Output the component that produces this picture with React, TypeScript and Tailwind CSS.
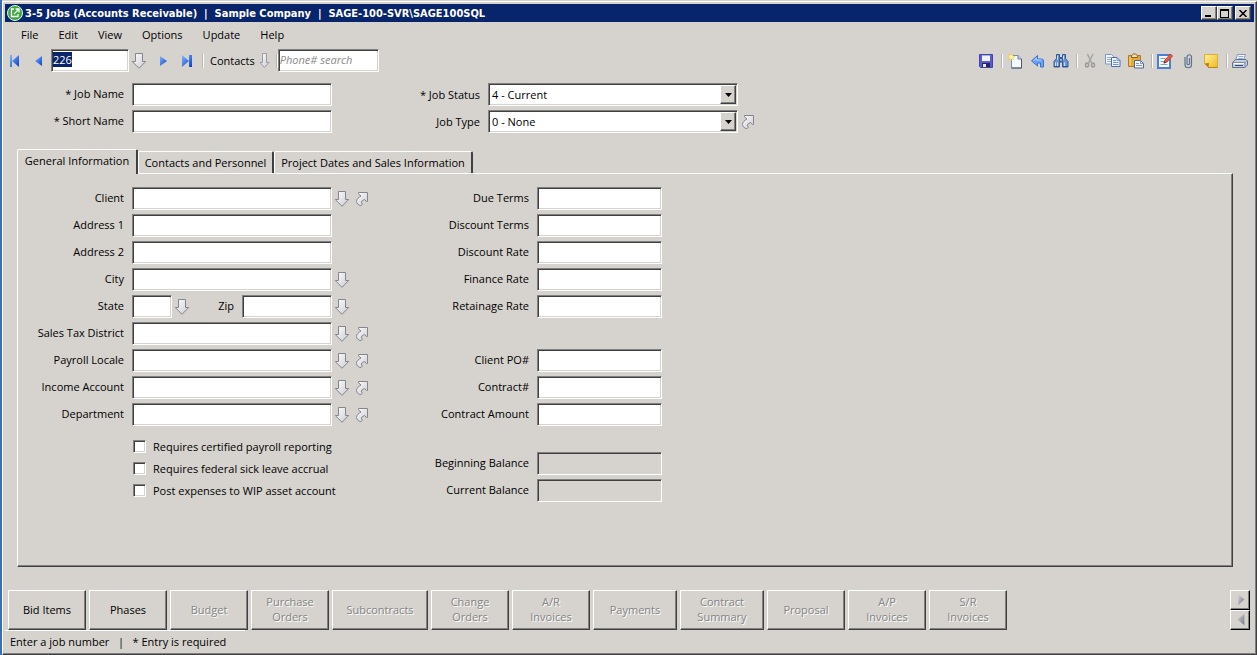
import { useEffect, useRef, useState, type ReactNode } from "react";

// Classic Windows bevels, shared by every field and button on the form.
const SUNKEN =
  "border border-t-[#808080] border-l-[#808080] border-r-white border-b-white shadow-[inset_1px_1px_0_#404040,inset_-1px_-1px_0_#d6d3ce]";
const RAISED =
  "border border-t-white border-l-white border-r-[#404040] border-b-[#404040] shadow-[inset_-1px_-1px_0_#808080]";
const SCROLL =
  "flex h-5 w-5 items-center justify-center border border-t-white border-l-white border-r-black border-b-black shadow-[inset_-1px_-1px_0_#808080]";

const MENUS = ["File", "Edit", "View", "Options", "Update", "Help"];
const TABS = [
  { label: "General Information", width: "w-[121px]" },
  { label: "Contacts and Personnel", width: "w-[136px]" },
  { label: "Project Dates and Sales Information", width: "w-[199px]" },
];

interface Field {
  id: string;
  label: string;
  pick?: boolean;
  jump?: boolean;
}

const ADDRESS_FIELDS: Field[] = [
  { id: "client", label: "Client", pick: true, jump: true },
  { id: "address1", label: "Address 1" },
  { id: "address2", label: "Address 2" },
  { id: "city", label: "City", pick: true },
];

const ACCOUNT_FIELDS: Field[] = [
  { id: "taxDistrict", label: "Sales Tax District", pick: true, jump: true },
  { id: "payrollLocale", label: "Payroll Locale", pick: true, jump: true },
  { id: "incomeAccount", label: "Income Account", pick: true, jump: true },
  { id: "department", label: "Department", pick: true, jump: true },
];

const CHECKS = [
  { id: "certified", label: "Requires certified payroll reporting" },
  { id: "sickLeave", label: "Requires federal sick leave accrual" },
  { id: "wip", label: "Post expenses to WIP asset account" },
];

const TERMS: Field[] = [
  { id: "dueTerms", label: "Due Terms" },
  { id: "discountTerms", label: "Discount Terms" },
  { id: "discountRate", label: "Discount Rate" },
  { id: "financeRate", label: "Finance Rate" },
  { id: "retainageRate", label: "Retainage Rate" },
];

const CONTRACT: Field[] = [
  { id: "clientPo", label: "Client PO#" },
  { id: "contractNo", label: "Contract#" },
  { id: "contractAmount", label: "Contract Amount" },
];

const BALANCES: Field[] = [
  { id: "beginningBalance", label: "Beginning Balance" },
  { id: "currentBalance", label: "Current Balance" },
];

const ACTIONS = [
  { label: "Bid Items", width: "w-[78px]", enabled: true },
  { label: "Phases", width: "w-[78px]", enabled: true },
  { label: "Budget", width: "w-[78px]" },
  { label: "Purchase Orders", width: "w-[78px]" },
  { label: "Subcontracts", width: "w-[96px]" },
  { label: "Change Orders", width: "w-[78px]" },
  { label: "A/R Invoices", width: "w-[78px]" },
  { label: "Payments", width: "w-[84px]" },
  { label: "Contract Summary", width: "w-[84px]" },
  { label: "Proposal", width: "w-[78px]" },
  { label: "A/P Invoices", width: "w-[78px]" },
  { label: "S/R Invoices", width: "w-[78px]" },
];

function Svg({ children, className = "size-4" }: { children: ReactNode; className?: string }) {
  return (
    <svg viewBox="0 0 16 16" fill="none" className={`shrink-0 ${className}`} aria-hidden="true">
      {children}
    </svg>
  );
}

function Gradients() {
  return (
    <svg className="absolute size-0" aria-hidden="true">
      <defs>
        <linearGradient id="silver" x1="0" y1="0" x2="1" y2="1">
          <stop offset="0" stopColor="#ffffff" />
          <stop offset="1" stopColor="#c9c9d2" />
        </linearGradient>
        <linearGradient id="blue" x1="0" y1="0" x2="1" y2="1">
          <stop offset="0" stopColor="#7fb6ff" />
          <stop offset="1" stopColor="#0a3fc8" />
        </linearGradient>
        <linearGradient id="note" x1="0" y1="0" x2="1" y2="1">
          <stop offset="0" stopColor="#fff3a0" />
          <stop offset="1" stopColor="#f0b81c" />
        </linearGradient>
        <linearGradient id="grey" x1="0" y1="0" x2="1" y2="1">
          <stop offset="0" stopColor="#d4d4dc" />
          <stop offset="1" stopColor="#77777f" />
        </linearGradient>
      </defs>
    </svg>
  );
}

function DownArrow() {
  return (
    <Svg>
      <path d="M4.500.500h7v8h3.200L8 15.300 1.300 8.500h3.200z" fill="url(#silver)" stroke="#85858c" />
    </Svg>
  );
}

function SmallDownArrow() {
  return (
    <svg viewBox="0 0 11 16" fill="none" className="h-4 w-[11px] shrink-0" aria-hidden="true">
      <path d="M3.500.500h4v9h2.500L5.500 14.500 1 9.500h2.500z" fill="url(#silver)" stroke="#9a9aa0" />
    </svg>
  );
}

function JumpArrow() {
  return (
    <Svg>
      <path
        d="M4.500 1.500h9v9h-1L10.500 8.500C8 9.500 7 10.500 7.500 12l1 1-1.500 1.700C4.500 14.500 2.500 12.500 2.500 10.500 2.500 8 4.500 6.500 7 5L4.500 2.800z"
        fill="url(#silver)"
        stroke="#85858c"
      />
    </Svg>
  );
}

function SaveIcon() {
  return (
    <Svg>
      <path d="M1.500 1.500h13v13h-12l-1-1z" fill="#5b5bd0" stroke="#4444a4" />
      <path d="M4 2h8v6H4z" fill="#eef3ff" />
      <path d="M4 2h8v1H4z" fill="#9db4ee" />
      <path d="M4 10h8v4H4z" fill="#26265e" />
      <path d="M5 11h3v3H5z" fill="#e8e8f4" />
    </Svg>
  );
}

function NewIcon() {
  return (
    <Svg>
      <path d="M4.500 2.500h6.500l3.500 3.500v9h-10z" fill="#f4f8ff" stroke="#7d8aa8" />
      <path d="M14.500 6v9h-10" stroke="#4b5468" />
      <path d="M11 2.500v3.500h3.500" fill="#c7d6f2" stroke="#6a7796" />
      <path d="M4 0v8M0 4h8M1 1l6 6M7 1L1 7" stroke="#efc94c" />
      <circle cx="4" cy="4" r="2" fill="#fff3a0" />
    </Svg>
  );
}

function UndoIcon() {
  return (
    <Svg>
      <path d="M7.500 2.500v3.500h4q2 0 2 2v6h-3V10h-3v3L1.500 7.800z" fill="#6aa5f7" stroke="#3a6fd0" />
      <path d="M3.500 7.500L6.500 5v2h5" stroke="#b4d6ff" />
    </Svg>
  );
}

function FindIcon() {
  return (
    <Svg>
      <path d="M3.500 1.500h3v3h3v-3h3v4l2.500 3v5.500h-5.500V9h-3v5H1V8.500l2.500-3z" fill="#6c94cf" stroke="#31569a" />
      <path d="M2.500 9.500v4M4.500 9.500v4M11.500 9.500v4M4.500 2.500v4M10.500 2.500v4" stroke="#cfe1f8" />
      <path d="M1 13.500h5.500M9.500 13.500H15" stroke="#31569a" />
      <path d="M6.500 5.500h3v3h-3z" fill="#8fb3e4" stroke="#31569a" />
    </Svg>
  );
}

function CutIcon() {
  return (
    <Svg>
      <path d="M5.500 1l4 9M11 1L6.500 10" stroke="#a5a5a5" strokeWidth="1.500" />
      <ellipse cx="5" cy="12" rx="1.500" ry="2" stroke="#9a9a9a" strokeWidth="1.500" />
      <ellipse cx="11" cy="12" rx="1.500" ry="2" stroke="#9a9a9a" strokeWidth="1.500" />
    </Svg>
  );
}

function CopyIcon() {
  return (
    <Svg>
      <path d="M.500 1.500h6l2.500 2.500v7H.500z" fill="#f2f7ff" stroke="#7c98cc" />
      <path d="M2 4.500h4M2 6.500h4M2 8.500h4" stroke="#8faede" />
      <path d="M6.500 4.500h5.500l3 3v6H6.500z" fill="#f2f7ff" stroke="#4a6db3" />
      <path d="M12 4.500v3h3M8 7.500h3M8 9.500h5.500M8 11.500h5.500" stroke="#6e93d4" />
    </Svg>
  );
}

function PasteIcon() {
  return (
    <Svg>
      <path d="M.500 2.500h12v11H.500z" fill="#e5a93b" stroke="#b07a24" />
      <path d="M3.500 4.500v-2l2-1.500h2l2 1.500v2z" fill="#f5dfa0" stroke="#78613a" />
      <path d="M2 4v8.500" stroke="#ffd987" />
      <path d="M6.500 7.500h6l3 3v4.500h-9z" fill="#f2f7ff" stroke="#4b659a" />
      <path d="M12.500 7.500v3h3M8 10.500h3M8 12.500h6" stroke="#7b98cc" />
    </Svg>
  );
}

function EditIcon() {
  return (
    <Svg>
      <path d="M1 2h12v13H1z" fill="#f5f9ff" stroke="#4a80d4" strokeWidth="2" />
      <path d="M3.500 5.500h5M3.500 8.500h4M3.500 11.500h7" stroke="#7ba2dd" />
      <path d="M7 10l1-3L13.500 1l2 2L10 9z" fill="#ee5a40" stroke="#c9402a" />
      <path d="M6.500 10.500l1-2.500 1.500 1.500z" fill="#3a3a3a" />
    </Svg>
  );
}

function ClipIcon() {
  return (
    <Svg>
      <path
        d="M5 4v7.500a3 3 0 0 0 6.500 0V4a2.200 2.200 0 0 0-4.500 0v6.500a1.200 1.200 0 0 0 2.500 0V5"
        stroke="#5d7291"
        strokeWidth="1.200"
      />
    </Svg>
  );
}

function NoteIcon() {
  return (
    <Svg>
      <path d="M1.500 1.500h13v13h-9l-4-4z" fill="url(#note)" stroke="#dcae30" />
      <path d="M1.500 10.500l4.500-.500-.500 4.500z" fill="#b47c0c" />
      <path d="M5 14.500h9.500" stroke="#b98715" />
    </Svg>
  );
}

function PrintIcon() {
  return (
    <Svg>
      <path d="M5.500 1.500h8l-2 6h-8z" fill="#f4f8ff" stroke="#8499bd" />
      <path d="M6.500 3.500h5M6 5.500h5" stroke="#8daad8" />
      <path d="M.500 9.500l3-3h10.500l1.500 1.500v4l-2.500 2.500H.500z" fill="#c5cede" stroke="#63738f" />
      <path d="M1 9.500h12l2-2M13 9.500v5" stroke="#7d8ca8" />
      <path d="M2 10.500h10" stroke="#ffffff" />
      <path d="M3 12.500h8" stroke="#3c4b6b" />
    </Svg>
  );
}

function Separator({ className = "" }: { className?: string }) {
  return <span className={`h-3.5 w-0.5 shrink-0 border-l border-[#b9b6b1] bg-white ${className}`} />;
}

function IconButton({
  name,
  children,
  disabled,
}: {
  name: string;
  children: ReactNode;
  disabled?: boolean;
}) {
  return (
    <button type="button" aria-label={name} title={name} disabled={disabled} className="flex shrink-0 items-center">
      {children}
    </button>
  );
}

function TextField({ id, className, readOnly }: { id: string; className: string; readOnly?: boolean }) {
  return (
    <input
      id={id}
      type="text"
      readOnly={readOnly}
      className={`h-[23px] shrink-0 px-1 outline-none ${SUNKEN} ${readOnly ? "bg-[#d6d3ce]" : "bg-white"} ${className}`}
    />
  );
}

function LabelledRow({
  field,
  labelWidth,
  inputWidth,
  readOnly,
}: {
  field: Field;
  labelWidth: string;
  inputWidth: string;
  readOnly?: boolean;
}) {
  return (
    <div className="flex items-center">
      <label htmlFor={field.id} className={`shrink-0 pr-2 pb-0.5 text-right ${labelWidth}`}>
        {field.label}
      </label>
      <TextField id={field.id} className={inputWidth} readOnly={readOnly} />
      <div className="flex gap-1 pl-0.5">
        {field.pick && (
          <IconButton name={`Look up ${field.label}`}>
            <DownArrow />
          </IconButton>
        )}
        {field.jump && (
          <IconButton name={`Open ${field.label}`}>
            <JumpArrow />
          </IconButton>
        )}
      </div>
    </div>
  );
}

function SelectRow({
  id,
  label,
  options,
  jump,
}: {
  id: string;
  label: string;
  options: string[];
  jump?: boolean;
}) {
  return (
    <div className="flex items-center">
      <label htmlFor={id} className="w-[93px] shrink-0 pr-2 text-right">
        {label}
      </label>
      <div className="relative w-[250px] shrink-0">
        <select id={id} className={`h-[23px] w-full appearance-none bg-white pl-[3px] outline-none ${SUNKEN}`}>
          {options.map((o) => (
            <option key={o}>{o}</option>
          ))}
        </select>
        <span
          className={`pointer-events-none absolute top-0.5 right-0.5 flex h-[19px] w-4 items-center justify-center bg-[#d6d3ce] ${RAISED}`}
        >
          <svg viewBox="0 0 7 4" className="h-1 w-[7px]" aria-hidden="true">
            <path d="M0 0h7L3.500 4z" fill="#000" />
          </svg>
        </span>
      </div>
      {jump && (
        <div className="flex pl-0.5">
          <IconButton name={`Open ${label}`}>
            <JumpArrow />
          </IconButton>
        </div>
      )}
    </div>
  );
}

function TitleBar() {
  const caption = `flex h-3.5 w-4 items-center justify-center bg-[#d6d3ce] ${RAISED}`;
  return (
    <header className="flex h-[18px] items-center bg-[#08246b] pr-[3px] text-white">
      <svg viewBox="0 0 18 18" className="ml-px size-[18px] shrink-0" aria-hidden="true">
        <circle cx="9" cy="9" r="7.500" fill="#3aa83f" stroke="#e8f5e4" strokeWidth="1" />
        <path d="M8 5H5.500v7.500H12V10" fill="none" stroke="#fff" strokeWidth="1.300" />
        <path d="M8 10l4-4M9.500 5h3.500v3.500" fill="none" stroke="#fff" strokeWidth="1.300" />
      </svg>
      <h1 className="flex-1 truncate pl-px font-['DejaVu_Sans_Condensed','DejaVu_Sans',sans-serif] text-[11px] font-bold whitespace-pre">
        {"3-5 Jobs (Accounts Receivable)  |  Sample Company  |  SAGE-100-SVR\\SAGE100SQL"}
      </h1>
      <button type="button" aria-label="Minimize" className={caption}>
        <svg viewBox="0 0 10 8" className="h-2 w-2.5">
          <path d="M1 6h6v2H1z" fill="#000" />
        </svg>
      </button>
      <button type="button" aria-label="Maximize" className={caption}>
        <svg viewBox="0 0 10 9" className="h-[9px] w-2.5">
          <path d="M0 0h9v9H0zM1 2v6h7V2z" fill="#000" fillRule="evenodd" />
        </svg>
      </button>
      <button type="button" aria-label="Close" className={`ml-0.5 ${caption}`}>
        <svg viewBox="0 0 8 7" className="h-[7px] w-2">
          <path d="M.5 0l7 7M7.500 0l-7 7" stroke="#000" strokeWidth="1.500" />
        </svg>
      </button>
    </header>
  );
}

function Toolbar() {
  const record = useRef<HTMLInputElement>(null);

  useEffect(() => {
    record.current?.focus();
    record.current?.select();
  }, []);

  return (
    <div className="flex h-[25px] items-center justify-between pr-1.5 pl-0.5">
      <div className="flex items-center">
        <IconButton name="First record">
          <Svg>
            <path d="M3 2h2v12H3zM12 2v12L5 8z" fill="url(#blue)" />
          </Svg>
        </IconButton>
        <span className="w-2" />
        <IconButton name="Previous record">
          <Svg>
            <path d="M11 3v10L4 8z" fill="url(#blue)" />
          </Svg>
        </IconButton>
        <input
          ref={record}
          aria-label="Job number"
          defaultValue="226"
          className={`ml-1 h-[23px] w-[78px] bg-white px-px pb-0.5 outline-none selection:bg-[#08246b] selection:text-white ${SUNKEN}`}
        />
        <span className="w-0.5" />
        <IconButton name="Look up job">
          <DownArrow />
        </IconButton>
        <span className="w-2" />
        <IconButton name="Next record">
          <Svg>
            <path d="M5 3v10l7-5z" fill="url(#blue)" />
          </Svg>
        </IconButton>
        <span className="w-2" />
        <IconButton name="Last record">
          <Svg>
            <path d="M3 2v12l7-6zM10 2h3v12h-3z" fill="url(#blue)" />
          </Svg>
        </IconButton>
        <span className="w-[7px]" />
        <Separator />
        <button type="button" className="flex items-center gap-1 px-1.5">
          Contacts
          <SmallDownArrow />
        </button>
        <Separator />
        <input
          aria-label="Phone# search"
          placeholder="Phone# search"
          className={`h-[23px] w-[101px] bg-white px-px pb-0.5 italic outline-none placeholder:text-[#8a8a8a] ${SUNKEN}`}
        />
      </div>
      <div className="flex items-center">
        <IconButton name="Save">
          <SaveIcon />
        </IconButton>
        <Separator className="mr-1 ml-[7px]" />
        <div className="flex gap-[7px]">
          <IconButton name="New">
            <NewIcon />
          </IconButton>
          <IconButton name="Undo">
            <UndoIcon />
          </IconButton>
          <IconButton name="Find">
            <FindIcon />
          </IconButton>
        </div>
        <Separator className="mr-1 ml-[7px]" />
        <div className="flex gap-[7px]">
          <IconButton name="Cut" disabled>
            <CutIcon />
          </IconButton>
          <IconButton name="Copy">
            <CopyIcon />
          </IconButton>
          <IconButton name="Paste">
            <PasteIcon />
          </IconButton>
        </div>
        <Separator className="mr-1 ml-[7px]" />
        <div className="flex gap-[7px]">
          <IconButton name="Edit notes">
            <EditIcon />
          </IconButton>
          <IconButton name="Attachments">
            <ClipIcon />
          </IconButton>
          <IconButton name="Note">
            <NoteIcon />
          </IconButton>
        </div>
        <Separator className="mr-1 ml-[7px]" />
        <IconButton name="Print">
          <PrintIcon />
        </IconButton>
      </div>
    </div>
  );
}

function GeneralInformation() {
  return (
    <div className="flex">
      <div className="flex w-[390px] shrink-0 flex-col gap-1">
        {ADDRESS_FIELDS.map((f) => (
          <LabelledRow key={f.id} field={f} labelWidth="w-[114px]" inputWidth="w-[200px]" />
        ))}
        <div className="flex items-center">
          <LabelledRow
            field={{ id: "state", label: "State", pick: true }}
            labelWidth="w-[114px]"
            inputWidth="w-10"
          />
          <LabelledRow
            field={{ id: "zip", label: "Zip", pick: true }}
            labelWidth="w-[52px]"
            inputWidth="w-[90px]"
          />
        </div>
        {ACCOUNT_FIELDS.map((f) => (
          <LabelledRow key={f.id} field={f} labelWidth="w-[114px]" inputWidth="w-[200px]" />
        ))}
        <div className="mt-[7px] flex flex-col gap-1 pl-[115px]">
          {CHECKS.map((c) => (
            <div key={c.id} className="flex h-[18px] items-center">
              <input
                id={c.id}
                type="checkbox"
                className={`size-[13px] shrink-0 appearance-none bg-white checked:bg-[#404040] ${SUNKEN}`}
              />
              <label htmlFor={c.id} className="pl-[7px]">
                {c.label}
              </label>
            </div>
          ))}
        </div>
      </div>
      <div className="flex flex-col gap-1">
        {TERMS.map((f) => (
          <LabelledRow key={f.id} field={f} labelWidth="w-[129px]" inputWidth="w-[125px]" />
        ))}
        <div className="mt-[27px] flex flex-col gap-1">
          {CONTRACT.map((f) => (
            <LabelledRow key={f.id} field={f} labelWidth="w-[129px]" inputWidth="w-[125px]" />
          ))}
        </div>
        <div className="mt-[22px] flex flex-col gap-1">
          {BALANCES.map((f) => (
            <LabelledRow key={f.id} field={f} labelWidth="w-[129px]" inputWidth="w-[125px]" readOnly />
          ))}
        </div>
      </div>
    </div>
  );
}

export default function App() {
  const [tab, setTab] = useState(0);

  return (
    <div className="flex min-h-screen flex-col border-l-2 border-[#3a6fb5] bg-[#d6d3ce] pt-px font-['Open_Sans','Noto_Sans',sans-serif] text-[11px] leading-[15px] text-black">
      <Gradients />
      <div className={`flex flex-1 flex-col p-0.5 ${RAISED}`}>
        <TitleBar />

        <nav className="flex h-[26px] items-center gap-1 pb-0.5 pl-2">
          {MENUS.map((m) => (
            <button key={m} type="button" className="px-2">
              {m}
            </button>
          ))}
        </nav>

        <Toolbar />

        <div className="mt-2.5 flex">
          <div className="flex w-[390px] shrink-0 flex-col gap-1">
            <LabelledRow
              field={{ id: "jobName", label: "* Job Name" }}
              labelWidth="w-[127px]"
              inputWidth="w-[200px]"
            />
            <LabelledRow
              field={{ id: "shortName", label: "* Short Name" }}
              labelWidth="w-[127px]"
              inputWidth="w-[200px]"
            />
          </div>
          <div className="flex flex-col gap-1">
            <SelectRow id="jobStatus" label="* Job Status" options={["4 - Current"]} />
            <SelectRow id="jobType" label="Job Type" options={["0 - None"]} jump />
          </div>
        </div>

        <main className="mt-4 mr-[21px] ml-3 flex flex-1 flex-col">
          <div role="tablist" className="flex items-end">
            {TABS.map((t, i) => (
              <button
                key={t.label}
                type="button"
                role="tab"
                aria-selected={tab === i}
                onClick={() => setTab(i)}
                className={`rounded-t-xs border-t border-l border-t-white border-l-white border-r-2 border-r-[#404040] whitespace-nowrap ${t.width} ${
                  tab === i ? "relative -mb-px h-[25px] bg-[#d6d3ce] pb-1" : "h-[22px]"
                }`}
              >
                {t.label}
              </button>
            ))}
          </div>
          <div role="tabpanel" className={`flex-1 pt-[13px] pb-4 ${RAISED}`}>
            {tab === 0 && <GeneralInformation />}
          </div>
        </main>

        <div className="mt-[23px] flex items-start justify-between pr-1 pl-[3px]">
          <div className="flex gap-[3px]">
            {ACTIONS.map((a) => (
              <button
                key={a.label}
                type="button"
                disabled={!a.enabled}
                className={`h-10 px-2 pb-0.5 ${RAISED} ${a.width} ${
                  a.enabled ? "" : "text-[#848484] [text-shadow:1px_1px_0_#fff]"
                }`}
              >
                {a.label}
              </button>
            ))}
          </div>
          <div className="flex flex-col">
            <button type="button" aria-label="Scroll right" className={SCROLL}>
              <Svg className="size-3.5">
                <path d="M6 1v13l7-6.500z" fill="url(#grey)" />
              </Svg>
            </button>
            <button type="button" aria-label="Scroll left" className={SCROLL}>
              <Svg className="size-3.5">
                <path d="M13 1v13L5 7.500z" fill="url(#grey)" />
              </Svg>
            </button>
          </div>
        </div>

        <footer className="flex h-[22px]">
          <p className="w-60 border-t border-white pt-[3px] pl-[5px] whitespace-pre">
            {"Enter a job number   |   * Entry is required"}
          </p>
        </footer>
      </div>
    </div>
  );
}
